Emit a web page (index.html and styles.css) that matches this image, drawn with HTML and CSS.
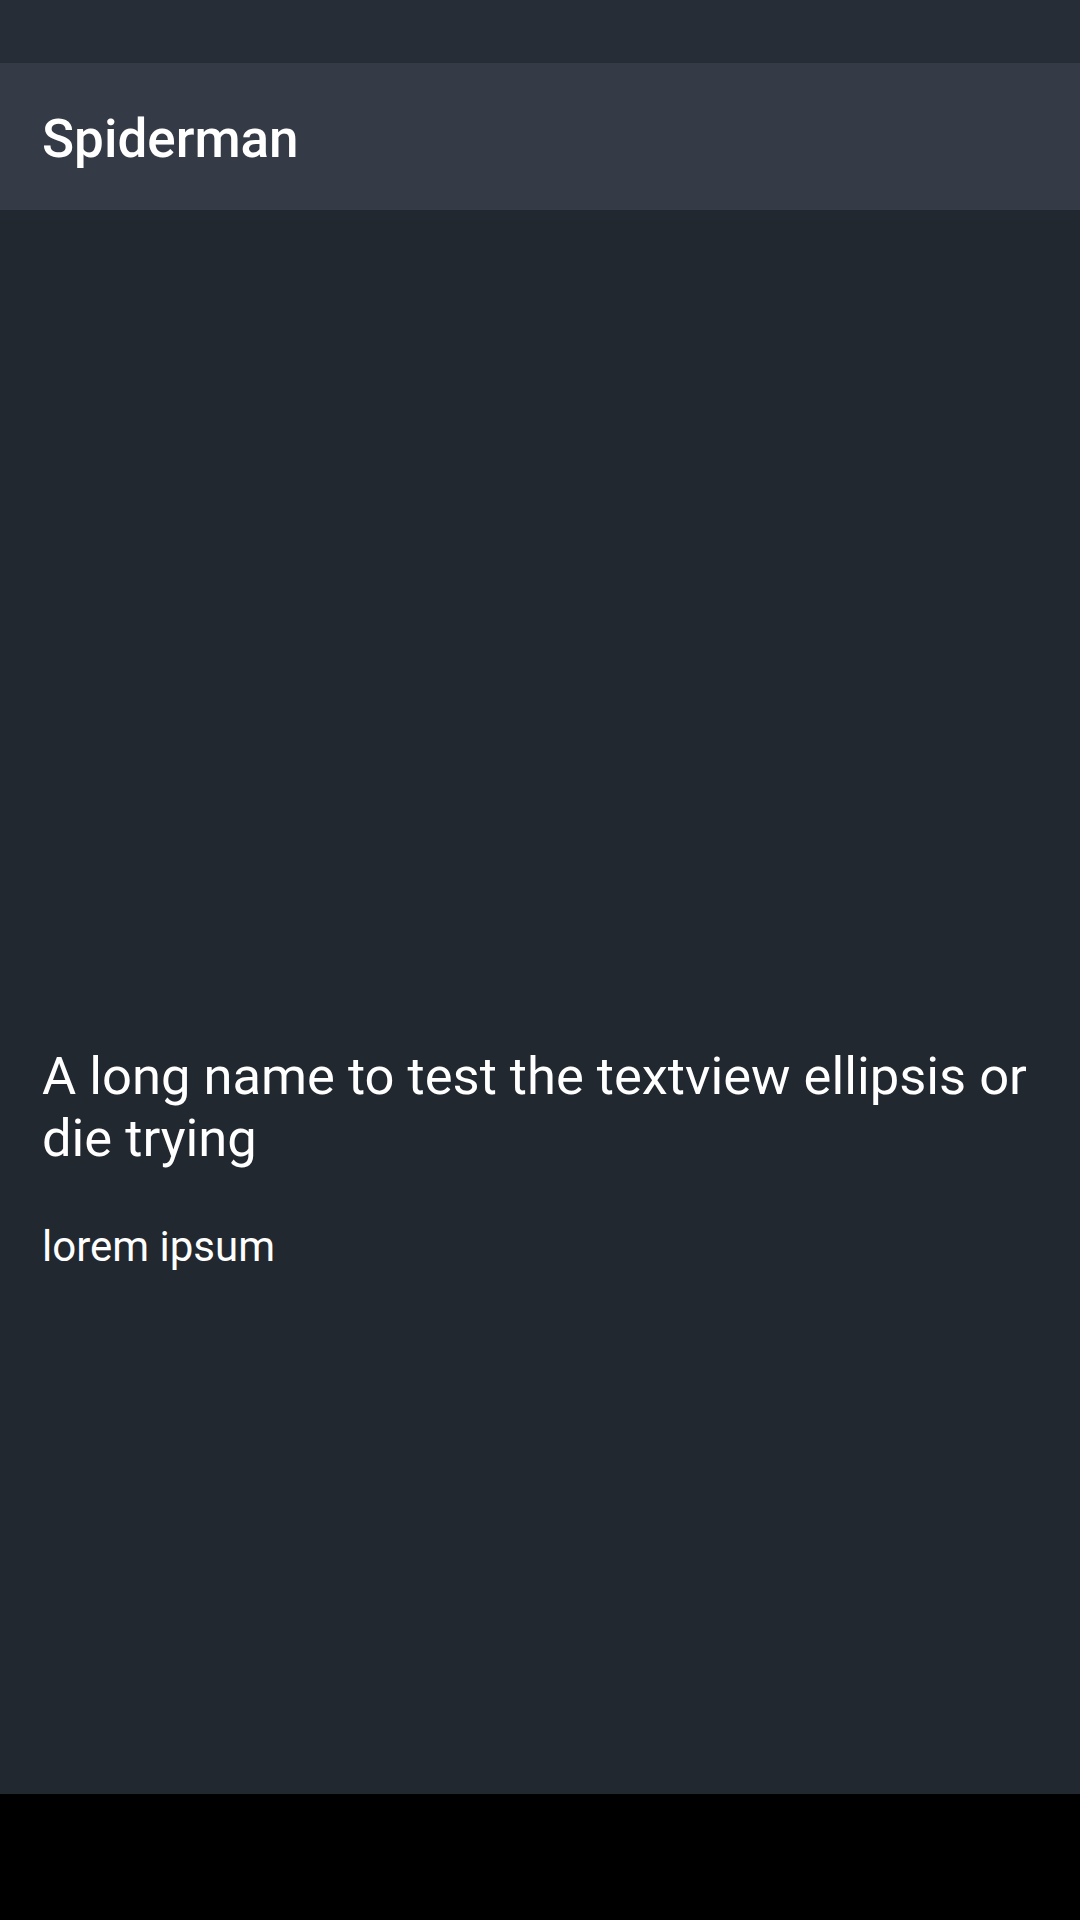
FILE: index.html
```html
<!DOCTYPE html>
<html>
<head>
<meta charset="utf-8">
<link rel="stylesheet" href="styles.css">
</head>
<body>
<div class="screen">
  <div class="statusbar"></div>
  <header class="toolbar"><h1 class="title">Spiderman</h1></header>
  <main class="content">
    <div class="media"></div>
    <h2 class="name">A long name to test the textview ellipsis or die trying</h2>
    <p class="desc">lorem ipsum</p>
  </main>
  <div class="navbar"></div>
</div>
</body>
</html>
```
FILE: styles.css
```css
* { box-sizing: border-box; }
html, body { margin: 0; padding: 0; }
body { background: #000; font-family: Roboto, "Noto Sans", sans-serif; color: #fff; }
.screen { width: 1080px; height: 1920px; display: flex; flex-direction: column; }
.statusbar { height: 63px; background: #272d37; flex: none; }
.toolbar { height: 147px; background: #343a46; flex: none; display: flex; align-items: center; padding: 5px 42px 0; }
.title { margin: 0; font-size: 53px; font-weight: 500; color: #fff; line-height: 1; }
.content { flex: 1; background: #222830; padding: 0 42px; display: flex; flex-direction: column; }
.media { height: 835px; flex: none; }
.name { margin: 0; font-size: 52.5px; font-weight: 400; line-height: normal; color: #fff; }
.desc { margin: 53px 0 0; font-size: 42px; line-height: normal; color: #fff; }
.navbar { height: 126px; background: #000; flex: none; }
```
